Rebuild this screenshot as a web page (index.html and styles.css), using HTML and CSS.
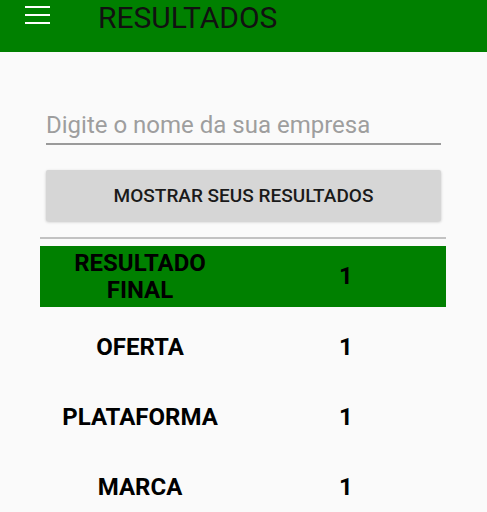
FILE: index.html
```html
<!DOCTYPE html>
<html lang="pt">
<head>
  <meta charset="UTF-8">
  <meta name="viewport" content="width=device-width, initial-scale=1.0">
  <title>Resultados</title>
  <link rel="stylesheet" href="styles.css">
</head>
<body>
  <header class="topbar">
    <svg class="menu-icon" width="25" height="18" viewBox="0 0 25 18">
      <path d="M0 1H25M0 9H25M0 17H25" stroke="#fff" stroke-width="2"/>
    </svg>
    <h1 class="title">RESULTADOS</h1>
  </header>

  <main class="content">
    <div class="search">
      <input type="text" class="company-input" placeholder="Digite o nome da sua empresa">
      <button class="show-btn">MOSTRAR SEUS RESULTADOS</button>
    </div>
    <hr class="divider">
    <div class="results">
      <div class="row row-final">
        <span class="label">RESULTADO<br>FINAL</span>
        <span class="value">1</span>
      </div>
      <div class="row">
        <span class="label">OFERTA</span>
        <span class="value">1</span>
      </div>
      <div class="row">
        <span class="label">PLATAFORMA</span>
        <span class="value">1</span>
      </div>
      <div class="row">
        <span class="label">MARCA</span>
        <span class="value">1</span>
      </div>
    </div>
  </main>
</body>
</html>
```

FILE: styles.css
```css
body {
    margin: 0;
    font-family: Roboto, "Liberation Sans", sans-serif;
    background-color: #fafafa;
    color: #000;
    overflow: hidden;
}
.topbar {
    display: flex;
    align-items: flex-start;
    gap: 48px;
    height: 52px;
    padding-left: 25px;
    background: #008000;
}
.menu-icon {
    margin-top: 6px;
}
.title {
    margin: 0;
    font-size: 30px;
    font-weight: 400;
    line-height: 35px;
    color: #111;
}
.content {
    padding: 58px 41px 0 40px;
}
.search {
    display: flex;
    flex-direction: column;
    padding: 0 5px 0 6px;
}
.company-input {
    font-family: inherit;
    font-size: 24px;
    line-height: 30px;
    height: 30px;
    padding: 0 0 3px 0;
    border: none;
    border-bottom: 2px solid #9a9a9a;
    background: transparent;
    outline: none;
}
.company-input::placeholder {
    color: #9e9e9e;
}
.show-btn {
    margin-top: 25px;
    height: 51px;
    font-family: inherit;
    font-size: 19px;
    font-weight: 500;
    color: #1a1a1a;
    background: #d6d6d6;
    border: none;
    border-radius: 2px;
    box-shadow: 0 1px 3px rgba(0, 0, 0, 0.22);
}
.divider {
    margin: 16px 0 0 0;
    border: none;
    height: 2px;
    background: #c2c2c2;
}
.results {
    display: grid;
    row-gap: 9px;
    margin-top: 7px;
}
.row {
    display: grid;
    grid-template-columns: 1fr 1fr;
    align-items: center;
    min-height: 61px;
    font-size: 24px;
    font-weight: 700;
    text-align: center;
}
.row-final {
    background: #008000;
    line-height: 27px;
}
.label {
    display: block;
    padding-right: 3px;
}
.value {
    display: block;
    padding-left: 3px;
}
```
